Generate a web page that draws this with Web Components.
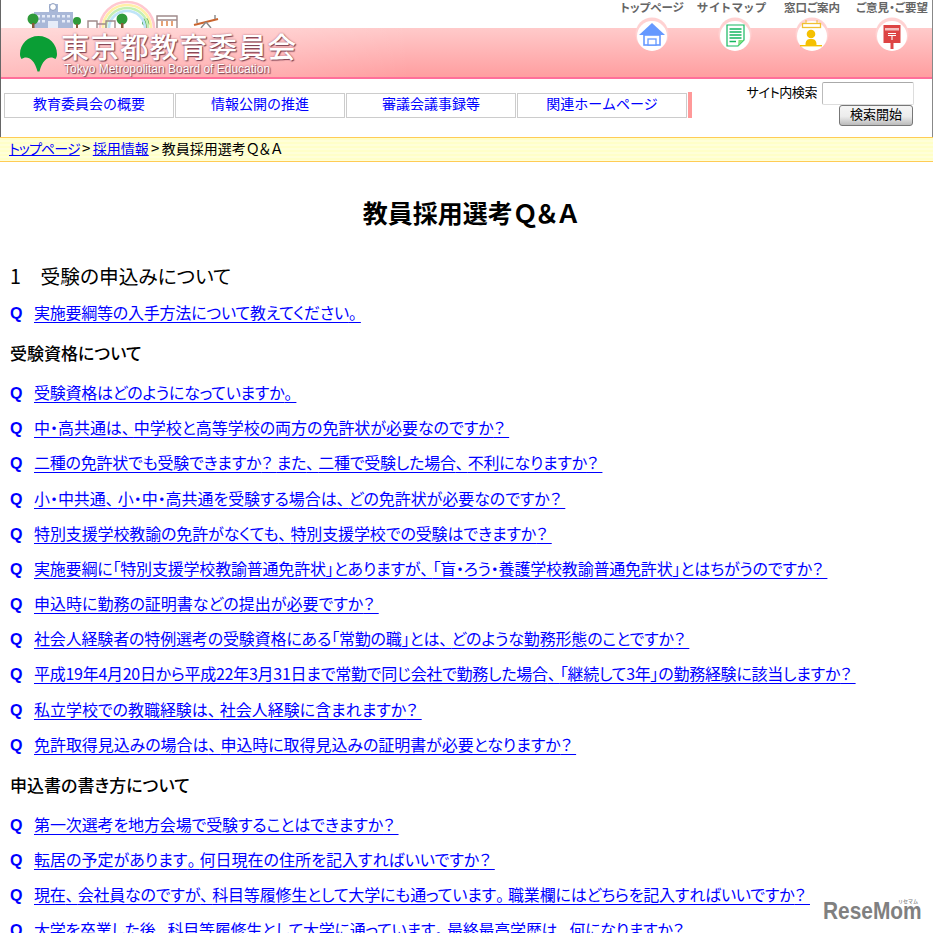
<!DOCTYPE html>
<html lang="ja"><head><meta charset="utf-8"><title>教員採用選考Q&amp;A</title>
<style>
html,body{margin:0;padding:0;height:933px;overflow:hidden;background:#fff}
body{font-family:"Noto Sans CJK JP","Noto Sans",sans-serif;color:#000;position:relative}
qa-link i{font-style:normal;letter-spacing:4px}
tm-breadcrumb i{font-style:normal;font-feature-settings:"palt" 0;letter-spacing:-2px}
qa-title i{font-style:normal;font-feature-settings:"palt" 0;letter-spacing:-3.5px}
tm-breadcrumb a:first-child{letter-spacing:-.9px}
</style></head><body>
<tm-header></tm-header>
<tm-breadcrumb><a href="#">トップページ</a><tm-sep>&gt;</tm-sep><a href="#">採用情報</a><tm-sep>&gt;</tm-sep>教員採用選考<i>&#xFF31;&#xFF06;&#xFF21;</i></tm-breadcrumb>
<qa-page>
<qa-title>教員採用選考<i>&#xFF31;&#xFF06;&#xFF21;</i></qa-title>
<qa-section>1　受験の申込みについて</qa-section>
<qa-link style="--ls:-.23px">実施要綱等の入手方法について教えてください<i>。</i></qa-link>
<qa-group>受験資格について</qa-group>
<qa-link style="--ls:-.28px">受験資格はどのようになっていますか<i>。</i></qa-link>
<qa-link style="--ls:-.03px">中・高共通は<i>、</i>中学校と高等学校の両方の免許状が必要なのですか<i>？</i></qa-link>
<qa-link style="--ls:-.24px">二種の免許状でも受験できますか<i>？</i>また<i>、</i>二種で受験した場合<i>、</i>不利になりますか<i>？</i></qa-link>
<qa-link style="--ls:-.05px">小・中共通<i>、</i>小・中・高共通を受験する場合は<i>、</i>どの免許状が必要なのですか<i>？</i></qa-link>
<qa-link style="--ls:-.12px">特別支援学校教諭の免許がなくても<i>、</i>特別支援学校での受験はできますか<i>？</i></qa-link>
<qa-link style="--ls:-.19px">実施要綱に「特別支援学校教諭普通免許状」とありますが<i>、</i>「盲・ろう・養護学校教諭普通免許状」とはちがうのですか<i>？</i></qa-link>
<qa-link>申込時に勤務の証明書などの提出が必要ですか<i>？</i></qa-link>
<qa-link style="--ls:-.16px">社会人経験者の特例選考の受験資格にある「常勤の職」とは<i>、</i>どのような勤務形態のことですか<i>？</i></qa-link>
<qa-link style="--ls:-.27px">平成19年4月20日から平成22年3月31日まで常勤で同じ会社で勤務した場合<i>、</i>「継続して3年」の勤務経験に該当しますか<i>？</i></qa-link>
<qa-link style="--ls:-.04px">私立学校での教職経験は<i>、</i>社会人経験に含まれますか<i>？</i></qa-link>
<qa-link style="--ls:-.06px">免許取得見込みの場合は<i>、</i>申込時に取得見込みの証明書が必要となりますか<i>？</i></qa-link>
<qa-group>申込書の書き方について</qa-group>
<qa-link style="--ls:-.12px">第一次選考を地方会場で受験することはできますか<i>？</i></qa-link>
<qa-link style="--ls:.03px">転居の予定があります<i>。</i>何日現在の住所を記入すればいいですか<i>？</i></qa-link>
<qa-link style="--ls:-.19px">現在<i>、</i>会社員なのですが<i>、</i>科目等履修生として大学にも通っています<i>。</i>職業欄にはどちらを記入すればいいですか<i>？</i></qa-link>
<qa-link style="--ls:-.26px">大学を卒業した後<i>、</i>科目等履修生として大学に通っています<i>。</i>最終最高学歴は<i>、</i>何になりますか<i>？</i></qa-link>
</qa-page>
<rm-mark></rm-mark>
<script>
const FONT='"Noto Sans CJK JP","Noto Sans",sans-serif';
function def(name,html){
  customElements.define(name,class extends HTMLElement{
    constructor(){super();this.attachShadow({mode:'open'}).innerHTML=html;}
  });
}
const scene=`<svg width="230" height="28" viewBox="0 0 230 28" style="display:block">
<rect x="33" y="12" width="39" height="16" fill="#a9b8d8"/>
<rect x="48" y="4" width="9" height="9" fill="#a9b8d8"/><circle cx="52" cy="7" r="3.4" fill="#fff" stroke="#8899bb"/>
<g fill="#e6ecf8"><rect x="36" y="15" width="3" height="2.5"/><rect x="41" y="15" width="3" height="2.5"/><rect x="46" y="15" width="3" height="2.5"/><rect x="51" y="15" width="3" height="2.5"/><rect x="56" y="15" width="3" height="2.5"/><rect x="61" y="15" width="3" height="2.5"/><rect x="66" y="15" width="3" height="2.5"/><rect x="36" y="20" width="3" height="2.5"/><rect x="41" y="20" width="3" height="2.5"/><rect x="61" y="20" width="3" height="2.5"/><rect x="66" y="20" width="3" height="2.5"/><rect x="47" y="21" width="10" height="7"/></g>
<g fill="#2f9a3a"><circle cx="32" cy="19" r="5.5"/><circle cx="76" cy="21" r="4"/><circle cx="121" cy="19" r="5.5"/><circle cx="145" cy="22" r="4"/></g>
<g fill="#8a5a3a"><rect x="31" y="23" width="2.5" height="5"/><rect x="75" y="24" width="2" height="4"/><rect x="120" y="23" width="2.5" height="5"/><rect x="144" y="25" width="2" height="3"/></g>
<g fill="none" stroke-width="2.6"><path d="M99 28A27 26 0 0 1 153 28" stroke="#ffc8d0"/><path d="M102 28A24 23 0 0 1 150 28" stroke="#fff0a8"/><path d="M105 28A21 20 0 0 1 147 28" stroke="#c4efb4"/><path d="M108 28A18 17 0 0 1 144 28" stroke="#bfe4f8"/></g>
<g fill="none" stroke="#a08a8a" stroke-width="1.4"><path d="M87 28V21H96V28M96 24H105M105 28V21H114V28"/><path d="M156 28V16H176V28M156 20H176"/></g>
<g stroke="#d9722e" stroke-width="1.3"><path d="M161 21V26M166 21V26M171 21V26"/></g>
<path d="M193 25L217 19" stroke="#c9652f" stroke-width="2.2"/><path d="M205 22L200 28M205 22L210 28M196 19V23M214 15V19" stroke="#888" stroke-width="1.4"/>
</svg>`;
const ginkgo=`<svg width="37" height="36" viewBox="0 0 37 36" style="display:block"><path d="M18.5 0C8 0 0 8 0 18C0 20 .5 21.5 1.5 23C6 19.5 14 21 17.5 35.5H19.5C23 21 31 19.5 35.5 23C36.5 21.5 37 20 37 18C37 8 29 0 18.5 0Z" fill="#0a9e35"/></svg>`;
const icons={
home:`<path d="M17 6L4 18H30Z" fill="#6699ff"/><rect x="9" y="18" width="16" height="10" fill="#fff" stroke="#6699ff" stroke-width="1.6"/><rect x="13" y="22" width="8" height="6" fill="#fff" stroke="#6699ff" stroke-width="1.3"/>`,
doc:`<path d="M9 8H26V23L20 29H9Z" fill="#fff" stroke="#14b860" stroke-width="1.2"/><path d="M11.500 12H23.500M11.500 15H23.500M11.500 18H23.500M11.500 21H23.500M11.500 24.500H18" stroke="#14b860" stroke-width="1.3"/><path d="M20 29L26 23H20.500Z" fill="#7fe07f"/>`,
desk:`<rect x="7.500" y="6.500" width="18" height="4" fill="#fff" stroke="#f0c030" stroke-width="1.300"/><path d="M11 3V6M22 3V6" stroke="#f0c030"/><circle cx="16" cy="17" r="4.300" fill="#f5c000"/><path d="M10.500 28C10.500 23 12.500 22 16 22S21.500 23 21.500 28Z" fill="#f5c000"/><rect x="5" y="28" width="22" height="1.400" fill="#f5c000"/>`,
post:`<rect x="8.500" y="8" width="17" height="18" fill="#dd4444"/><rect x="10" y="11" width="14" height="2.500" fill="#f6c0c0"/><path d="M13 16.500H21M13 18.500H21M17 18.500V23" stroke="#fff" stroke-width="1.100"/><rect x="15.500" y="26" width="3" height="6" fill="#dd4444"/>`};
const tool=(label,ic,cls='')=>`<div class="tool ${cls}"><span>${label}</span><svg class="ic" width="34" height="34" viewBox="0 0 34 34"><circle cx="17" cy="17" r="16.500" fill="#ffd2d2"/><circle cx="17" cy="19" r="15" fill="#fff"/>${icons[ic]}</svg></div>`;
def('tm-header',`<style>
:host{display:block;box-sizing:border-box;height:137px;border-left:1px solid #666;border-right:1px solid #888;font-family:${FONT}}
.banner{height:79px;box-sizing:border-box;border-bottom:2px solid #ff6f9a;display:flex;justify-content:space-between;
background:linear-gradient(90deg,rgba(255,255,255,.3) 0,rgba(255,255,255,.14) 280px,rgba(255,255,255,0) 410px) 0 28px/100% 51px no-repeat,linear-gradient(#ffcaca,#ff9c9e) 0 28px/100% 51px no-repeat}
.brand{display:flex;flex-direction:column}
.logo{display:flex;height:49px;padding-left:19px}
.logo svg{margin-top:8px}
.names{margin-left:4px;color:#fff;text-shadow:1px 1px 1px #7a4050,0 0 2px #b06070}
.jp{font-size:28.500px;line-height:30px;margin-top:3px;letter-spacing:1px;white-space:nowrap;font-weight:500}
.en{font:12px/13px "Liberation Sans",sans-serif;margin:2px 0 0 3px;white-space:nowrap}
.tools{display:grid;grid-template-columns:repeat(4,80px);padding-top:1px}
.tool{display:flex;flex-direction:column;align-items:center;white-space:nowrap}
.tool.wide{padding-left:5px}
.tool.wide span{letter-spacing:1.400px;margin-left:-5px}
.tool span{font-size:11.500px;line-height:13px;font-weight:700;color:#666;height:16px;font-feature-settings:"palt"}
.ic{display:block;margin-top:0}
.low{display:flex;justify-content:space-between;height:56px}
nav{display:flex;align-items:flex-start;padding:14px 0 0 3px}
nav a{box-sizing:border-box;width:170px;height:25px;margin-right:1px;border:1px solid #ccc;text-align:center;color:#00f;text-decoration:none;font-size:14px;line-height:18px}
.end{width:4px;height:26px;margin-top:-1px;background:#ff9999}
.search{display:grid;grid-template-columns:auto 92px;column-gap:5px;align-items:center;padding:3px 18px 0 0;align-content:start}
label{font-size:13px;line-height:18px;white-space:nowrap;font-feature-settings:"palt";margin-top:-4px;letter-spacing:-.4px}
.input{box-sizing:border-box;height:23px;border:1px solid #ddd;border-top-color:#aaa;border-left-color:#bbb;border-radius:2px;background:#fff}
button{grid-column:2;justify-self:end;width:74px;height:21px;padding:0 0 3px;margin-right:1px;border:1px solid #777;border-radius:3px;background:linear-gradient(#f5f5f5,#ececec 55%,#bbb);font:13px/16px ${FONT};color:#000}
</style>
<div class="banner"><div class="brand">${scene}<div class="logo">${ginkgo}<div class="names"><div class="jp">東京都教育委員会</div><div class="en">Tokyo Metropolitan Board of Education</div></div></div></div>
<div class="tools">${tool('トップページ','home')}${tool('サイトマップ','doc','wide')}${tool('窓口ご案内','desk')}${tool('ご意見・ご要望','post')}</div></div>
<div class="low"><nav><a href="#">教育委員会の概要</a><a href="#">情報公開の推進</a><a href="#">審議会議事録等</a><a href="#">関連ホームページ</a><div class="end"></div></nav>
<div class="search"><label>サイト内検索</label><div class="input"></div><button>検索開始</button></div></div>`);
def('tm-breadcrumb',`<style>
:host{display:block;box-sizing:border-box;height:25px;padding-left:9px;border-top:1px solid #fc5;border-bottom:1px solid #fc5;background:repeating-linear-gradient(#ffffc8 0 2px,#ffffd8 2px 4px);font:14px/20px ${FONT};white-space:nowrap;font-feature-settings:"palt"}
::slotted(a){color:#00f}
</style><slot></slot>`);
def('tm-sep',`<style>:host{display:inline-block;width:13px;text-align:center;font-size:15px}</style><slot></slot>`);
def('qa-page',`<style>:host{display:block;padding-left:10px}</style><slot></slot>`);
def('qa-title',`<style>:host{display:block;height:86px;padding:34px 0 0;box-sizing:border-box;text-align:center;font-size:25px;line-height:32px;font-weight:700;font-feature-settings:"palt";margin-left:-3px}</style><slot></slot>`);
def('qa-section',`<style>:host{display:block;height:47px;font-size:19.700px;line-height:56px;box-sizing:border-box;white-space:nowrap;font-feature-settings:"palt"}</style><slot></slot>`);
def('qa-group',`<style>:host{display:block;height:44.800px;font-size:17px;line-height:46px;font-weight:500;white-space:nowrap;font-feature-settings:"palt"}</style><slot></slot>`);
def('qa-link',`<style>
:host{display:block;height:35.200px;line-height:35.200px;white-space:nowrap;font-size:16px;font-feature-settings:"palt";letter-spacing:var(--ls,0)}
a{color:#00f;text-decoration:underline;text-underline-offset:3px;text-decoration-thickness:1px;text-decoration-skip-ink:none}
b{display:inline-block;width:24px;letter-spacing:0;font:700 16px "Liberation Sans",sans-serif}
</style><a href="#"><b>Q</b><slot></slot></a>`);
def('rm-mark',`<style>
:host{position:absolute;left:823px;top:895px;width:98px;height:28px;color:#808080;font:700 24px/16px "Liberation Sans",sans-serif;white-space:nowrap}
span{display:block;margin-top:8px;transform:scaleX(.87);transform-origin:0 50%}
small{position:absolute;right:3px;top:3px;font:500 5px/5px ${FONT}}
</style><span>ReseMom</span><small>リセマム</small>`);
</script>
</body></html>
